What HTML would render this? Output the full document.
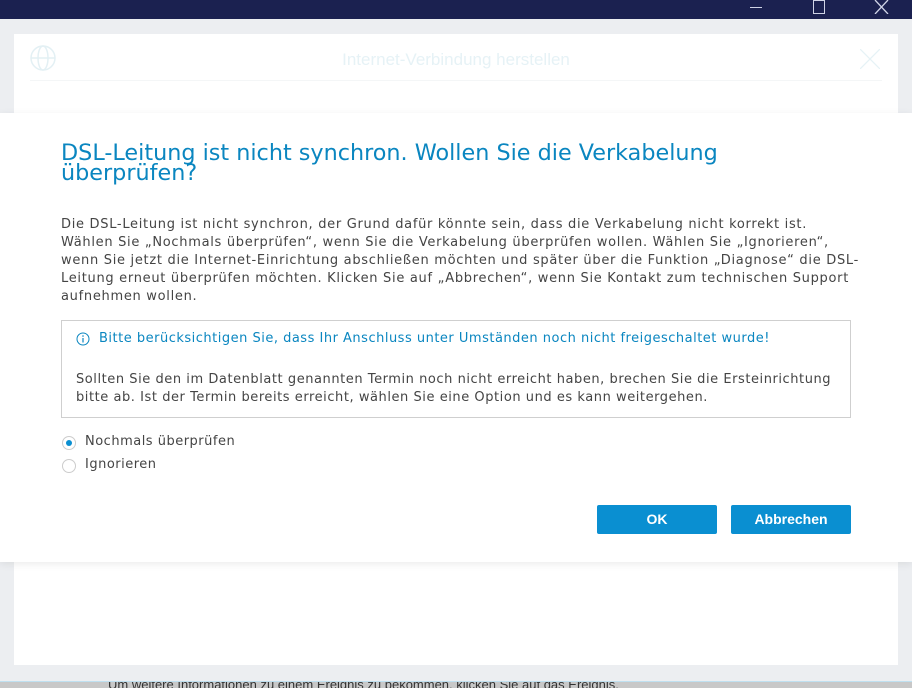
<!DOCTYPE html>
<html><head><meta charset="utf-8"><style>
*{margin:0;padding:0;box-sizing:border-box}
body{width:912px;height:688px;overflow:hidden;position:relative;background:#eceef1;font-family:"DejaVu Sans",Verdana,sans-serif}
.tb{position:absolute;left:0;top:0;width:912px;height:19px;background:#1b2150}
.bg{position:absolute;left:0;top:19px;width:912px;height:662px;background:#eceef1}
.inner{position:absolute;left:14px;top:34px;width:884px;height:631px;background:#fff}
.ititle{position:absolute;left:0;width:884px;top:16px;text-align:center;font-family:"Liberation Sans",sans-serif;font-size:17px;color:#e6f2f6}
.bot{position:absolute;left:0;top:681px;width:912px;height:7px;background:#c8c8c8;border-top:1px solid #bfe0f0;overflow:hidden}
.bot span{position:absolute;left:108px;top:-5px;font-family:"Liberation Sans",sans-serif;font-size:13px;color:#333}
.modal{position:absolute;left:0;top:113px;width:912px;height:449px;background:#fff;box-shadow:0 2px 8px rgba(0,0,0,.08)}
h1{position:absolute;left:61px;top:30px;font-weight:normal;font-size:22.3px;line-height:20px;color:#0a86c0;white-space:nowrap}
.p{position:absolute;left:61px;top:103px;font-size:13px;line-height:18px;color:#444;white-space:nowrap;letter-spacing:0.7px}
.box{position:absolute;left:61px;top:207px;width:790px;height:98px;border:1px solid #cfcfcf}
.box .a{position:absolute;left:37px;top:10px;font-size:13px;color:#0a86c0;white-space:nowrap;letter-spacing:0.5px}
.box .b{position:absolute;left:14px;top:50px;font-size:13px;line-height:18px;color:#444;white-space:nowrap;letter-spacing:0.55px}
.r{position:absolute;left:62px;font-size:13px;color:#444;white-space:nowrap;letter-spacing:0.5px}
.r i{position:absolute;left:0;top:2px;width:14px;height:14px;border:1px solid #ccc;border-radius:50%}
.r span{position:absolute;left:23px;top:0}
.btn{position:absolute;top:392px;width:120px;height:29px;background:#0a8fd1;border-radius:2px;color:#fff;font-size:14px;font-weight:bold;text-align:center;line-height:29px;font-family:"Liberation Sans",sans-serif}
</style></head><body>
<div class="tb">
<div style="position:absolute;left:750px;top:7px;width:12px;height:1px;background:#cfd3e6"></div>
<div style="position:absolute;left:813px;top:0;width:12px;height:14px;border:1px solid #cfd3e6"></div>
<svg style="position:absolute;left:874px;top:0" width="15" height="14"><path d="M1 0L14 14M14 0L1 14" stroke="#cfd3e6" stroke-width="1.3"/></svg>
</div>
<div class="bg"></div>
<div class="inner">
<svg style="position:absolute;left:15px;top:10px" width="34" height="30"><circle cx="14" cy="14" r="12" fill="none" stroke="#e3f0f4" stroke-width="1.5"/><ellipse cx="14" cy="14" rx="5" ry="12" fill="none" stroke="#e3f0f4" stroke-width="1.5"/><path d="M2 14H26" stroke="#e3f0f4" stroke-width="1.5"/></svg>
<div class="ititle">Internet-Verbindung herstellen</div>
<svg style="position:absolute;left:846px;top:15px" width="20" height="20"><path d="M0 0L20 20M20 0L0 20" stroke="#e6f2f6" stroke-width="1.3"/></svg>
<div style="position:absolute;left:16px;top:46px;width:852px;height:1px;background:#f4f6f7"></div>
</div>
<div class="bot"><span>Um weitere Informationen zu einem Ereignis zu bekommen, klicken Sie auf das Ereignis.</span></div>
<div class="modal">
<h1>DSL-Leitung ist nicht synchron. Wollen Sie die Verkabelung<br>überprüfen?</h1>
<div class="p">Die DSL-Leitung ist nicht synchron, der Grund dafür könnte sein, dass die Verkabelung nicht korrekt ist.<br>Wählen Sie „Nochmals überprüfen“, wenn Sie die Verkabelung überprüfen wollen. Wählen Sie „Ignorieren“,<br>wenn Sie jetzt die Internet-Einrichtung abschließen möchten und später über die Funktion „Diagnose“ die DSL-<br>Leitung erneut überprüfen möchten. Klicken Sie auf „Abbrechen“, wenn Sie Kontakt zum technischen Support<br>aufnehmen wollen.</div>
<div class="box">
<svg style="position:absolute;left:14px;top:11px" width="14" height="14"><circle cx="7" cy="7" r="6" fill="none" stroke="#0a86c0" stroke-width="1"/><path d="M7 6V10.5" stroke="#0a86c0" stroke-width="1.2"/><circle cx="7" cy="4" r="0.8" fill="#0a86c0"/></svg>
<div class="a">Bitte berücksichtigen Sie, dass Ihr Anschluss unter Umständen noch nicht freigeschaltet wurde!</div>
<div class="b">Sollten Sie den im Datenblatt genannten Termin noch nicht erreicht haben, brechen Sie die Ersteinrichtung<br>bitte ab. Ist der Termin bereits erreicht, wählen Sie eine Option und es kann weitergehen.</div>
</div>
<div class="r" style="top:321px"><i><b style="position:absolute;left:3px;top:3px;width:6px;height:6px;border-radius:50%;background:#0a8fd1"></b></i><span>Nochmals überprüfen</span></div>
<div class="r" style="top:344px"><i></i><span>Ignorieren</span></div>
<div class="btn" style="left:597px">OK</div>
<div class="btn" style="left:731px">Abbrechen</div>
</div>
</body></html>
